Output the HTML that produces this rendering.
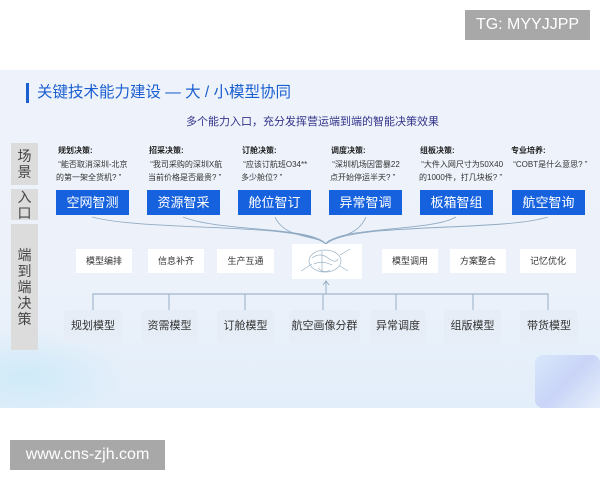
<!DOCTYPE html>
<html><head><meta charset="utf-8"><style>
*{margin:0;padding:0;box-sizing:border-box}
body{width:600px;height:480px;background:#fff;position:relative;overflow:hidden;font-family:"Liberation Sans","Noto Sans CJK SC",sans-serif}
.a{position:absolute}
.bg{left:0;top:70px;width:600px;height:338px;background:linear-gradient(180deg,#eef3fb 0%,#edf2fa 60%,#e2eefa 100%)}
.lab{background:#dcdcdc;color:#444;font-size:14px;line-height:16px;text-align:center;left:11px;width:27px;display:flex;flex-direction:column;justify-content:center;align-items:center}
.h{font-size:8px;font-weight:bold;color:#222}
.q{font-size:8px;color:#333;line-height:13px;white-space:nowrap}
.btn{top:190px;width:73px;height:25px;background:#1662de;color:#fff;font-size:13px;text-align:center;line-height:25px}
.w{top:249px;height:24px;background:#fff;font-size:9px;color:#333;text-align:center;line-height:24px}
.m{top:310px;height:33px;background:#e6edf6;border-radius:4px;font-size:11px;color:#333;text-align:center;line-height:33px}
</style></head><body>
<div class="a bg"></div>
<div class="a" style="left:0;top:330px;width:130px;height:78px;background:radial-gradient(ellipse at 20% 60%,#cfeaf8 0%,rgba(220,238,250,0) 70%)"></div>
<div class="a" style="left:535px;top:355px;width:65px;height:53px;background:linear-gradient(135deg,#d8e8fb,#c9d4f7 50%,#e6f0fb);border-radius:8px"></div>
<div class="a" style="left:465px;top:10px;width:125px;height:30px;background:#a8a8a8;color:#fff;font-size:16px;line-height:30px;text-align:center">TG: MYYJJPP</div>
<div class="a" style="left:10px;top:440px;width:155px;height:30px;background:#a8a8a8;color:#fff;font-size:16px;line-height:30px;text-align:center">www.cns-zjh.com</div>

<div class="a" style="left:26px;top:83px;width:3px;height:20px;background:#1a5fd0"></div>
<div class="a" style="left:37px;top:82px;font-size:15.5px;color:#1a5fd0;white-space:nowrap;line-height:22px">关键技术能力建设 — 大 / 小模型协同</div>
<div class="a" style="left:186px;top:115px;width:230px;font-size:11px;color:#33338a;white-space:nowrap;line-height:14px">多个能力入口，充分发挥营运端到端的智能决策效果</div>

<div class="a lab" style="top:143px;height:42px">场<br>景</div>
<div class="a lab" style="top:189px;height:31px">入<br>口</div>
<div class="a lab" style="top:224px;height:126px">端<br>到<br>端<br>决<br>策</div>

<div class="a h" style="left:58px;top:145px">规划决策:</div>
<div class="a q" style="left:56px;top:158px">&nbsp;“能否取消深圳-北京<br>的第一架全货机? ”</div>
<div class="a h" style="left:149px;top:145px">招采决策:</div>
<div class="a q" style="left:148px;top:158px">&nbsp;“我司采购的深圳X航<br>当前价格是否最贵? ”</div>
<div class="a h" style="left:242px;top:145px">订舱决策:</div>
<div class="a q" style="left:241px;top:158px">&nbsp;“应该订航班O34**<br>多少舱位? ”</div>
<div class="a h" style="left:331px;top:145px">调度决策:</div>
<div class="a q" style="left:330px;top:158px">&nbsp;“深圳机场因雷暴22<br>点开始停运半天? ”</div>
<div class="a h" style="left:420px;top:145px">组板决策:</div>
<div class="a q" style="left:419px;top:158px">&nbsp;“大件入网尺寸为50X40<br>的1000件，打几块板? ”</div>
<div class="a h" style="left:511px;top:145px">专业培养:</div>
<div class="a q" style="left:511px;top:158px">&nbsp;“COBT是什么意思? ”</div>

<div class="a btn" style="left:56px">空网智测</div>
<div class="a btn" style="left:147px">资源智采</div>
<div class="a btn" style="left:238px">舱位智订</div>
<div class="a btn" style="left:329px">异常智调</div>
<div class="a btn" style="left:420px">板箱智组</div>
<div class="a btn" style="left:512px">航空智询</div>

<svg class="a" style="left:0;top:0" width="600" height="408">
<g fill="none" stroke="#8fa9c2" stroke-width="0.9">
<path d="M92 217 C150 232 300 222 326 244"/>
<path d="M183 217 C220 232 310 226 326 244"/>
<path d="M275 217 C285 240 320 235 326 244"/>
<path d="M366 217 C356 240 330 235 326 244"/>
<path d="M456 217 C430 232 340 226 326 244"/>
<path d="M548 217 C500 232 350 222 326 244"/>
<path d="M93 310 V294 H548 V310 M169 294 V310 M245 294 V310 M323 294 V310 M396 294 V310 M473 294 V310 M326 294 V281 M323 285 L326 281 L329 285"/>
</g>
</svg>

<div class="a w" style="left:76px;width:56px">模型编排</div>
<div class="a w" style="left:148px;width:56px">信息补齐</div>
<div class="a w" style="left:217px;width:57px">生产互通</div>
<div class="a" style="left:292px;top:244px;width:70px;height:35px;background:#fff">
<svg width="70" height="35"><g fill="none" stroke="#9bb4c8" stroke-width="0.7"><ellipse cx="33" cy="17" rx="16" ry="11"/><path d="M20 14 Q28 8 36 14 T46 15 M22 20 Q30 16 40 21 M30 7 V28 M26 24 Q32 30 38 26"/><path d="M48 11 L58 5 M48 22 L56 27 M20 20 L9 27"/></g></svg></div>
<div class="a w" style="left:382px;width:56px">模型调用</div>
<div class="a w" style="left:450px;width:56px">方案整合</div>
<div class="a w" style="left:520px;width:56px">记忆优化</div>

<div class="a m" style="left:64px;width:58px">规划模型</div>
<div class="a m" style="left:141px;width:57px">资需模型</div>
<div class="a m" style="left:217px;width:57px">订舱模型</div>
<div class="a m" style="left:289px;width:71px">航空画像分群</div>
<div class="a m" style="left:370px;width:56px">异常调度</div>
<div class="a m" style="left:444px;width:57px">组版模型</div>
<div class="a m" style="left:520px;width:58px">带货模型</div>
</body></html>
